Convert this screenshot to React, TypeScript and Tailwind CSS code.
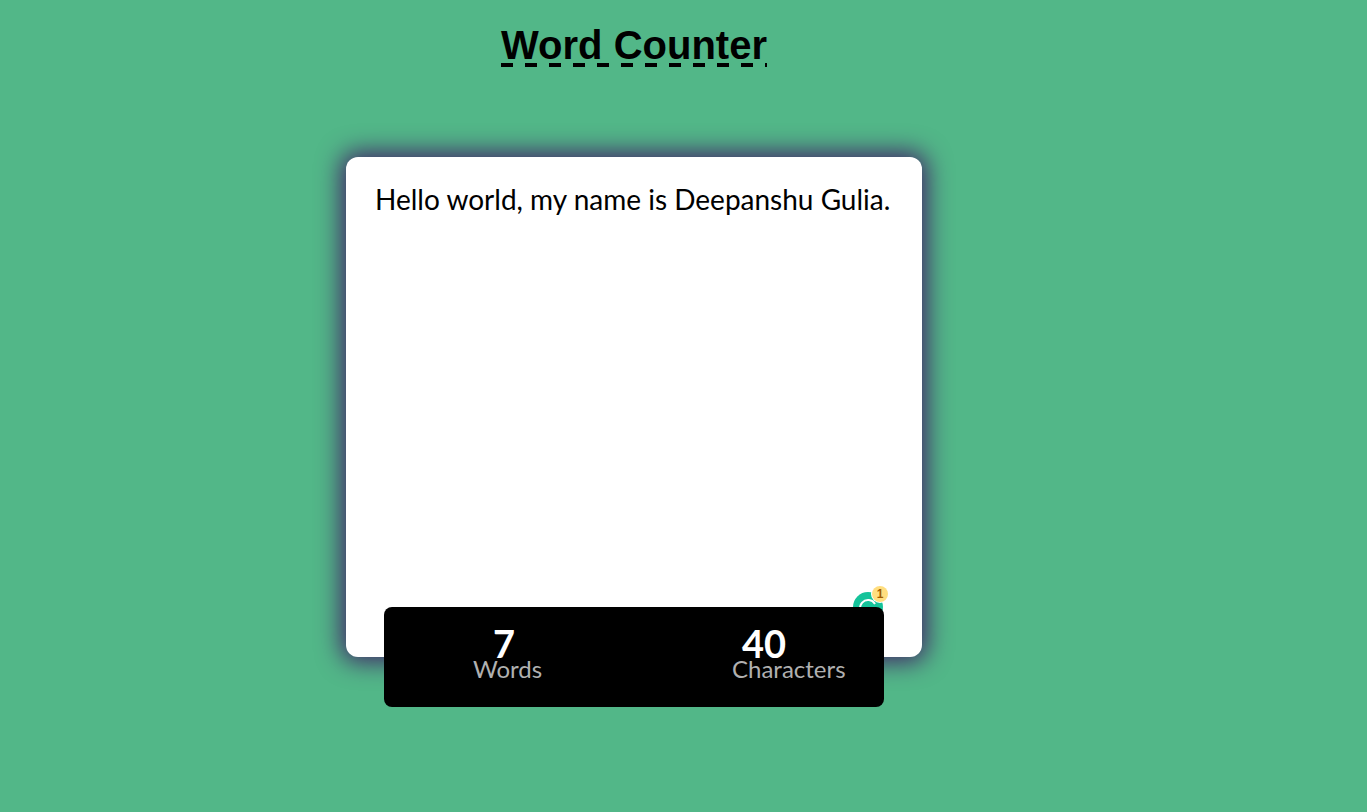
import { useState } from "react";

export default function App() {
  const [text, setText] = useState("Hello world, my name is Deepanshu Gulia.");
  const trimmed = text.trim();
  const words = trimmed === "" ? 0 : trimmed.split(/\s+/).length;

  return (
    <main className="flex min-h-screen flex-col items-center bg-[#52b788] pt-5 pr-[99px] pb-[105px] font-['Gill_Sans_MT','Lato',sans-serif]">
      <h1 className="bg-[repeating-linear-gradient(90deg,#000_0px,#000_12px,transparent_12px,transparent_24px)] bg-[length:100%_4px] bg-[position:0_43px] bg-no-repeat font-['Liberation_Sans',Arial,sans-serif] text-[40px] leading-[50px] font-bold text-black">
        Word Counter
      </h1>

      <section className="relative mt-[87px] w-full max-w-[576px]">
        <textarea
          aria-label="Text to count"
          spellCheck={false}
          value={text}
          onChange={(e) => setText(e.target.value)}
          className="block h-[500px] w-full resize-none rounded-xl bg-white px-[29px] py-6 text-[28px] leading-9 text-black shadow-[0_0_25px_5px_#422668] outline-none"
        />
        <svg
          className="absolute right-[33px] bottom-[34px] h-9 w-9"
          viewBox="0 0 36 36"
          aria-hidden="true"
        >
          <circle cx="15" cy="20" r="15" fill="#15c39a" />
          <path
            d="M22 17A8 8 0 1 0 23 22h-5"
            fill="none"
            stroke="#fff"
            strokeWidth="2"
          />
        </svg>
        <span className="absolute right-[34px] bottom-[55px] flex h-4 w-4 items-center justify-center rounded-full bg-[#ffde7f] font-['Liberation_Sans',Arial,sans-serif] text-xs leading-4 font-bold text-[#a35c00] ring-1 ring-white">
          1
        </span>
      </section>

      <dl className="relative -mt-[50px] grid h-[100px] w-full max-w-[500px] grid-cols-2 rounded-lg bg-black pt-[22px]">
        <div className="flex flex-col-reverse justify-end pl-[89px]">
          <dt className="text-2xl leading-6 text-[#b0b0b0]">Words</dt>
          <dd className="pl-5 text-[38px] leading-7 font-bold text-white">{words}</dd>
        </div>
        <div className="flex flex-col-reverse justify-end pl-[98px]">
          <dt className="text-2xl leading-6 text-[#b0b0b0]">Characters</dt>
          <dd className="pl-[10px] text-[38px] leading-7 font-bold text-white">{text.length}</dd>
        </div>
      </dl>
    </main>
  );
}
